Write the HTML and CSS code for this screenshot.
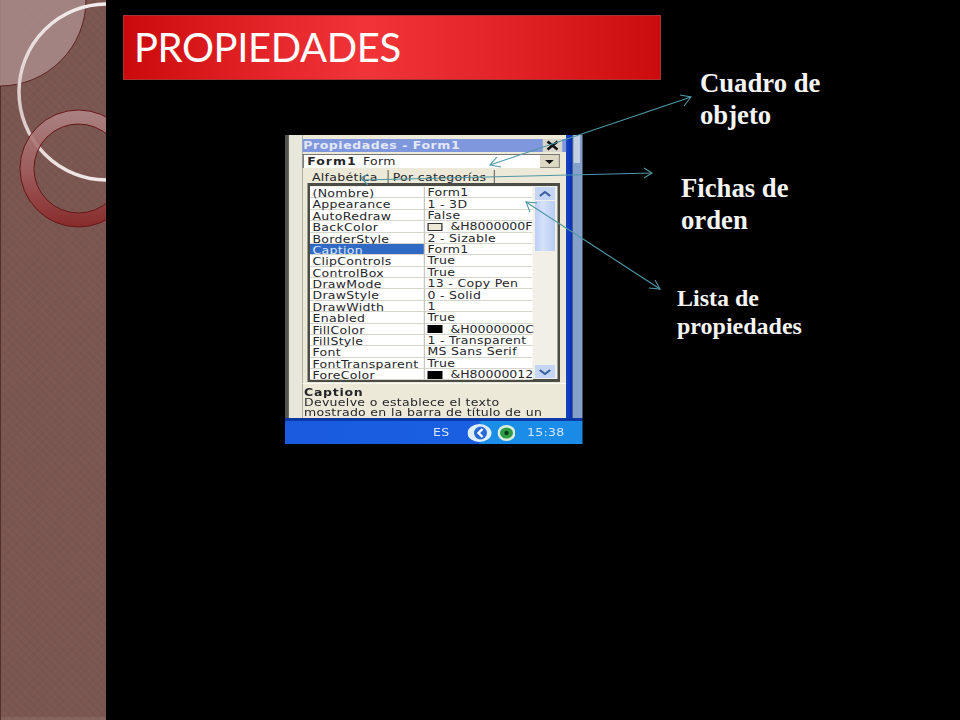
FILE: index.html
```html
<!DOCTYPE html>
<html lang="es">
<head>
  <meta charset="UTF-8">
  <meta name="viewport" content="width=device-width, initial-scale=1.0">
  <title>Propiedades</title>
  <link rel="stylesheet" href="styles.css">
</head>
<body>
  <div class="page">
    <aside class="sidebar">
      <svg class="sidebar-art" width="106" height="720" viewBox="0 0 106 720">
        <defs>
          <linearGradient id="ringFill" x1="0" y1="0" x2="0" y2="1">
            <stop offset="0" stop-color="#b08888"/>
            <stop offset="0.5" stop-color="#a35f60"/>
            <stop offset="1" stop-color="#8a2526"/>
          </linearGradient>
          <linearGradient id="hoopStroke" x1="0" y1="0" x2="0" y2="1">
            <stop offset="0" stop-color="#f2ecea"/>
            <stop offset="0.6" stop-color="#d8c8c6"/>
            <stop offset="1" stop-color="#f0e8e6"/>
          </linearGradient>
        </defs>
        <circle cx="0" cy="0" r="86" fill="#a58785" fill-opacity="0.92" stroke="#5e2320" stroke-width="1"/>
        <circle cx="107" cy="92" r="88" fill="none" stroke="#4e2c2a" stroke-width="1" opacity="0.5" transform="translate(1 1)"/>
        <circle cx="107" cy="92" r="88" fill="none" stroke="url(#hoopStroke)" stroke-width="3.5"/>
        <path d="M78.5 110a58.5 58.5 0 1 0 0 117a58.5 58.5 0 1 0 0-117zM78.5 124a44.5 44.5 0 1 1 0 89a44.5 44.5 0 1 1 0-89z" fill="url(#ringFill)" fill-opacity="0.88" fill-rule="evenodd" stroke="#651717" stroke-width="1"/>
      </svg>
    </aside>

    <main class="slide">
      <h1 class="title-bar">PROPIEDADES</h1>

      <!-- the screenshot is stretched sideways in the slide, so widths in here are before the scale -->
      <div class="shot">
        <div class="shot-main">
          <div class="shot-strip"></div>
          <div class="shot-gutter"></div>
          <div class="panel">
            <div class="panel-title">
              <span>Propiedades - Form1</span>
              <svg class="close-icon" width="16" height="13" viewBox="0 0 20 13" preserveAspectRatio="none">
                <rect width="20" height="13" fill="#d8d6cc"/>
                <path d="M5 2.5l10 8M15 2.5l-10 8" stroke="#111" stroke-width="2.6"/>
              </svg>
            </div>
            <div class="combo">
              <span class="combo-text"><b>Form1</b> Form</span>
              <span class="combo-button"><svg width="7" height="4" viewBox="0 0 8 4" preserveAspectRatio="none"><path d="M0 0h8l-4 4z" fill="#111"/></svg></span>
            </div>
            <div class="tabs">
              <span class="tab">Alfabética</span>
              <span class="tab tab-second">Por categorías</span>
            </div>
            <div class="grid-box">
              <div class="props">
                <div class="name">(Nombre)</div><div class="value">Form1</div>
                <div class="name">Appearance</div><div class="value">1 - 3D</div>
                <div class="name">AutoRedraw</div><div class="value">False</div>
                <div class="name">BackColor</div><div class="value"><i class="swatch swatch-beige"></i><span class="hex">&amp;H8000000F</span></div>
                <div class="name">BorderStyle</div><div class="value">2 - Sizable</div>
                <div class="name selected">Caption</div><div class="value">Form1</div>
                <div class="name">ClipControls</div><div class="value">True</div>
                <div class="name">ControlBox</div><div class="value">True</div>
                <div class="name">DrawMode</div><div class="value">13 - Copy Pen</div>
                <div class="name">DrawStyle</div><div class="value">0 - Solid</div>
                <div class="name">DrawWidth</div><div class="value">1</div>
                <div class="name">Enabled</div><div class="value">True</div>
                <div class="name">FillColor</div><div class="value"><i class="swatch"></i><span class="hex">&amp;H0000000C</span></div>
                <div class="name">FillStyle</div><div class="value">1 - Transparent</div>
                <div class="name">Font</div><div class="value">MS Sans Serif</div>
                <div class="name">FontTransparent</div><div class="value">True</div>
                <div class="name">ForeColor</div><div class="value"><i class="swatch"></i><span class="hex">&amp;H80000012</span></div>
              </div>
              <div class="scrollbar">
                <span class="scroll-button"><svg width="10" height="6" viewBox="0 0 12 6" preserveAspectRatio="none"><path d="M1 5l5-4 5 4" fill="none" stroke="#3a5f9e" stroke-width="2"/></svg></span>
                <span class="scroll-thumb"></span>
                <span class="scroll-button scroll-down"><svg width="10" height="6" viewBox="0 0 12 6" preserveAspectRatio="none"><path d="M1 1l5 4 5-4" fill="none" stroke="#3a5f9e" stroke-width="2"/></svg></span>
              </div>
            </div>
            <div class="description">
              <b>Caption</b>
              <p>Devuelve o establece el texto<br>mostrado en la barra de título de un</p>
            </div>
          </div>
          <div class="shot-edge"></div>
          <div class="shot-rail"><span class="rail-thumb"></span></div>
        </div>
        <div class="taskbar">
          <span class="lang">ES</span>
          <div class="tray">
            <svg class="tray-chevron" width="19.2" height="18" viewBox="0 0 24 18" preserveAspectRatio="none">
              <ellipse cx="12" cy="9" rx="12" ry="9" fill="#dfeefb"/>
              <circle cx="13" cy="9" r="6.5" fill="#2a6bd8"/>
              <path d="M15 5l-4 4 4 4" fill="none" stroke="#fff" stroke-width="2.4"/>
            </svg>
            <svg class="tray-shield" width="14.4" height="16" viewBox="0 0 18 16" preserveAspectRatio="none">
              <ellipse cx="9" cy="8" rx="9" ry="8" fill="#dbeedd"/>
              <ellipse cx="9" cy="8" rx="6.5" ry="5.5" fill="#2f9d46"/>
              <circle cx="9" cy="8" r="2.2" fill="#0e3d1c"/>
            </svg>
            <span class="clock">15:38</span>
          </div>
        </div>
      </div>

      <p class="label label-object">Cuadro de<br>objeto</p>
      <p class="label label-tabs">Fichas de<br>orden</p>
      <p class="label label-list">Lista de<br>propiedades</p>

      <!-- arrows go over the screenshot, page coordinates -->
      <svg class="arrows" width="854" height="720" viewBox="106 0 854 720">
        <g fill="none" stroke="#4f97a6" stroke-width="1.1">
          <path d="M691 97L490 165"/>
          <path d="M680 95L691 97L684 106"/>
          <path d="M497 157L490 165L501 167"/>
          <path d="M652 173L362 180"/>
          <path d="M644 168L652 173L644 178"/>
          <path d="M368 174L361 178L368 185"/>
          <path d="M660 289L526 202"/>
          <path d="M649 288L660 289L655 280"/>
          <path d="M530 212L526 202L537 203"/>
        </g>
      </svg>
    </main>
  </div>
</body>
</html>
```

FILE: styles.css
```css
html, body {
  margin: 0;
  height: 100%;
  background: #000;
  overflow: hidden;
}
.page {
  display: flex;
  width: 960px;
  height: 720px;
}

/* left decoration */
.sidebar {
  width: 106px;
  height: 720px;
  flex-shrink: 0;
  background-color: #7b5650;
  background-image:
    repeating-linear-gradient(45deg, rgba(255,255,255,0.015) 0 3px, transparent 3px 6px),
    repeating-linear-gradient(-45deg, rgba(0,0,0,0.025) 0 3px, transparent 3px 6px);
  box-shadow: inset 1px 0 0 #54302c, inset 0 -3px 0 rgba(255,255,255,0.08);
}
.sidebar-art {
  display: block;
}

.slide {
  position: relative;
  flex: 1;
}
.title-bar {
  width: 538px;
  height: 65px;
  box-sizing: border-box;
  margin: 15px 0 0 17px;
  padding: 5px 0 0 10px;
  border: 1px solid #a83434;
  background: linear-gradient(90deg, #cb0a0c 0%, #e7282c 30%, #f03438 45%, #e4262a 68%, #cb0c0e 100%);
  color: #fff;
  font-family: Lato, "Open Sans", sans-serif;
  font-size: 40px;
  font-weight: 400;
  line-height: 52px;
  letter-spacing: -0.4px;
}

/* labels on the slide */
.label {
  position: absolute;
  margin: 0;
  color: #f4f4f4;
  font-family: "Liberation Serif", serif;
  font-weight: 700;
}
.label-object {
  left: 594px;
  top: 67px;
  font-size: 26.7px;
  line-height: 32px;
}
.label-tabs {
  left: 575px;
  top: 172px;
  font-size: 26.7px;
  line-height: 32px;
}
.label-list {
  left: 571px;
  top: 284px;
  font-size: 24px;
  line-height: 28px;
}
.arrows {
  position: absolute;
  top: 0;
  left: 0;
  pointer-events: none;
}

/* the pasted screenshot, 237.6px wide before the stretch */
.shot {
  position: absolute;
  left: 179px;
  top: 135px;
  width: 237.6px;
  height: 309px;
  display: flex;
  flex-direction: column;
  transform: scaleX(1.25);
  transform-origin: left top;
  filter: blur(0.3px);
  font-family: "DejaVu Sans", sans-serif;
  font-size: 10px;
  letter-spacing: 0.25px;
  color: #26262a;
}
.shot-main {
  display: flex;
  height: 283px;
}
.shot-strip {
  width: 3.2px;
  background: #55554f;
}
.shot-gutter {
  width: 10.4px;
  background: #e8e7dc;
}
.panel {
  width: 211.2px;
  box-sizing: border-box;
  padding-top: 4px;
  background: #ece9d8;
  display: flex;
  flex-direction: column;
}
.shot-edge {
  width: 4.8px;
  background: linear-gradient(90deg, #1246d0, #0a2fa8);
}
.shot-rail {
  flex: 1;
  padding: 0 1.6px;
  background: #86a0cc;
}
.rail-thumb {
  display: block;
  height: 28px;
  background: #c3cfe2;
}
.panel-title {
  height: 13px;
  display: flex;
  justify-content: space-between;
  padding-left: 1px;
  background: #7f97dd;
  color: #e4e8f6;
  font-weight: 700;
  line-height: 13px;
  letter-spacing: 0.45px;
}
.close-icon {
  margin-right: 2.4px;
}
.combo {
  height: 13px;
  display: flex;
  justify-content: space-between;
  margin: 2px 4.8px 0 0.8px;
  border-top: 1px solid #777;
  border-left: 1px solid #555;
  background: #fff;
  line-height: 13px;
}
.combo-text {
  padding-left: 2.4px;
}
.combo-text b {
  letter-spacing: 0.8px;
  margin-right: 1.6px;
}
.combo-button {
  width: 16px;
  display: flex;
  align-items: center;
  justify-content: center;
  background: #dcd8c4;
  box-shadow: inset -1px -1px 0 #8f8d80;
}
.tabs {
  height: 13px;
  display: flex;
  margin-top: 2px;
  line-height: 15px;
}
.tab {
  width: 60px;
  padding-left: 8px;
  border-right: 1.6px solid #77756c;
}
.tab-second {
  width: 81px;
  padding-left: 3.6px;
}
.grid-box {
  width: 201.6px;
  height: 199px;
  box-sizing: border-box;
  display: flex;
  margin-left: 4.8px;
  padding-top: 1px;
  border: 3px solid #4c4c46;
  border-left-width: 2.4px;
  border-right-width: 2.4px;
  background: #f1efe6;
}
.props {
  width: 177.6px;
  height: 193.4px;
  display: grid;
  grid-template-columns: 92px 85.6px;
  grid-auto-rows: 11.375px;
  background: #fff;
}
.name, .value {
  box-sizing: border-box;
  padding-top: 1px;
  white-space: nowrap;
  line-height: 11px;
  border-bottom: 1px solid #d8d6cc;
}
.name {
  padding-left: 1.6px;
  border-right: 1px solid #c8c6bc;
}
.value {
  display: flex;
  align-items: center;
  padding-left: 1.6px;
}
.hex {
  letter-spacing: 0;
}
.selected {
  background: #316ac5;
  color: #dfe8f8;
}
.swatch {
  width: 12px;
  height: 8px;
  flex-shrink: 0;
  margin-right: 6.4px;
  background: #000;
}
.swatch-beige {
  box-sizing: border-box;
  border: 1px solid #333;
  background: #ece9d8;
}
.scrollbar {
  flex: 1;
  display: flex;
  flex-direction: column;
  padding: 0 1.6px;
}
.scroll-button {
  height: 13px;
  display: flex;
  align-items: center;
  justify-content: center;
  background: #c5d5f4;
}
.scroll-thumb {
  height: 50px;
  margin-top: 1px;
  background: linear-gradient(90deg, #bccff6, #d5e1fa 40%, #b8ccf4);
}
.scroll-down {
  margin-top: auto;
  margin-bottom: 1px;
}
.description {
  margin-top: 1px;
  padding: 4px 0 0 1.6px;
  border-top: 1px solid #fbfaf4;
  line-height: 10px;
}
.description b {
  letter-spacing: 0.6px;
}
.description p {
  margin: 0;
}
.taskbar {
  height: 26px;
  box-sizing: border-box;
  display: flex;
  align-items: center;
  border-top: 3px solid #0d39a6;
  background: linear-gradient(90deg, #1a5be0 0%, #1a5fe2 65%, #1b8fe8 66%, #1a8ae6 100%);
  color: #d5e6fa;
}
.lang {
  margin-left: 118.4px;
  width: 28px;
}
.tray {
  display: flex;
  align-items: center;
}
.tray-shield {
  margin-left: 4px;
}
.clock {
  margin-left: 9.6px;
}
```
